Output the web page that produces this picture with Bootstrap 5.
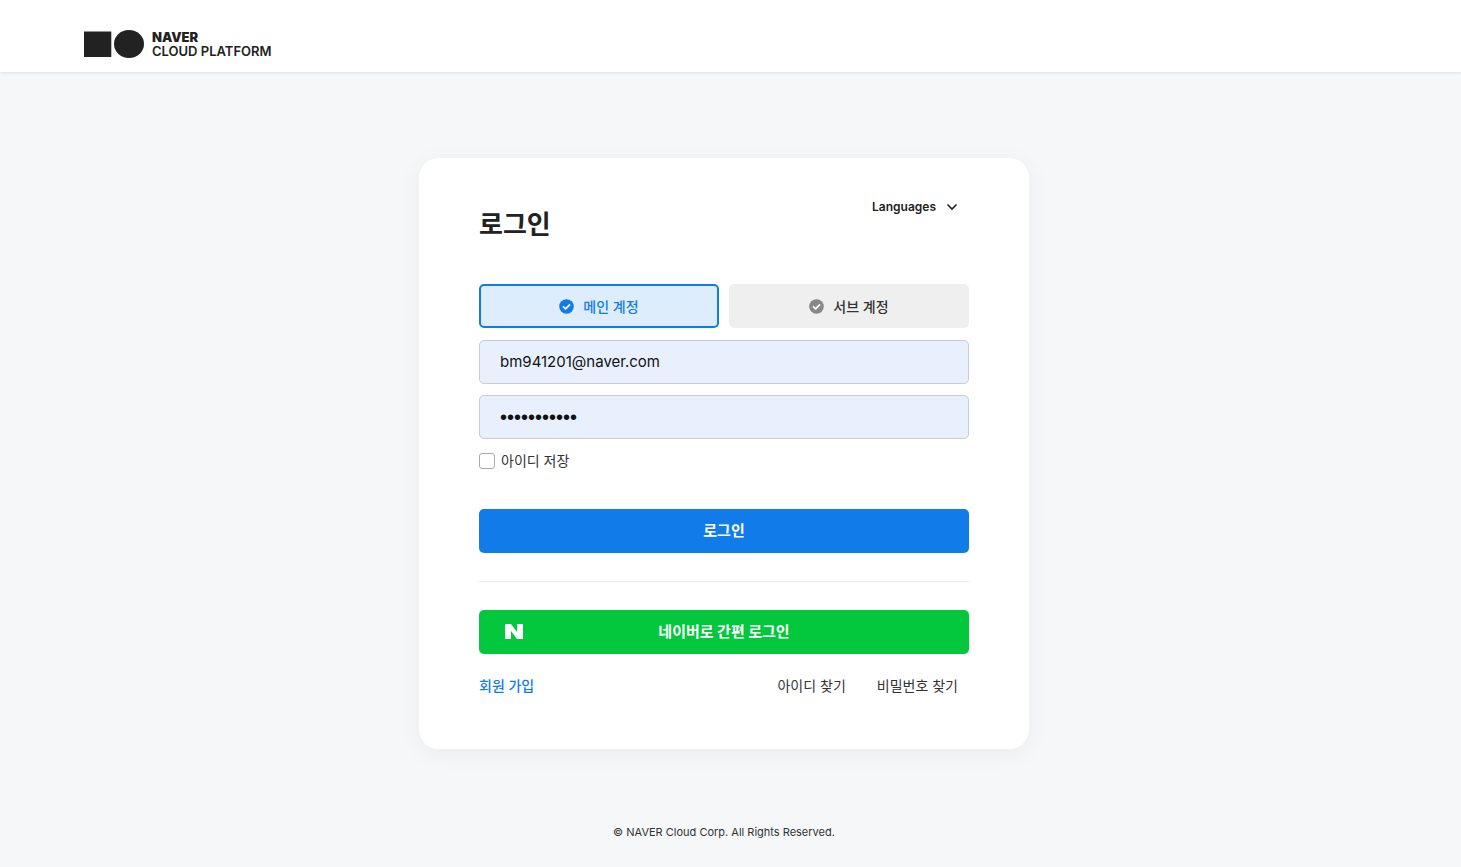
<!DOCTYPE html>
<html lang="ko">
<head>
<meta charset="utf-8">
<meta name="viewport" content="width=device-width, initial-scale=1">
<title>로그인 - NAVER Cloud Platform</title>
<link href="https://cdn.jsdelivr.net/npm/bootstrap@5.3.0/dist/css/bootstrap.min.css" rel="stylesheet">
<style>
  body { font-family: Inter, "Noto Sans CJK KR", sans-serif; font-size: 14px; line-height: 20px; color: #333; background: #f5f7f9; }
  a { color: inherit; text-decoration: none; }
  .site-header { height: 72px; padding: 16px 84px 0; box-shadow: 0 1px 3px rgba(0, 0, 0, .1); }
  .brand-name { font-size: 13px; line-height: 14px; font-weight: 600; color: #222; }
  .brand-name strong { font-size: 13px; font-weight: 900; }
  .page-main { padding: 86px 13px 0 0; }
  .login-panel { max-width: 610px; padding: 38px 60px 53px; border-radius: 20px; box-shadow: 0 4px 24px rgba(0, 0, 0, .05); }
  .login-title { font-size: 26px; line-height: 36px; font-weight: 700; color: #222; padding-top: 11px; margin-bottom: 41px; }
  .lang-btn { font-size: 12px; font-weight: 600; color: #222; padding: 1px 11px 0; gap: 10px; line-height: 20px; }
  .account-tab, .submit-btn, .login-input { height: 44px; border-radius: 5px; }
  .account-tab { font-size: 14px; font-weight: 500; gap: 9px; color: #333; background: #efefef; border: 2px solid #efefef; }
  .account-tab.selected { color: #117ce9; background: #deedfc; border-color: #117ce9; }
  .tab-row { gap: 10px; margin-bottom: 12px; }
  .login-input, .login-input:focus { font-size: 15px; color: #111; background: #e8f0fe; border: 1px solid #c9ccd2; padding: 0 20px 2px; }
  .login-input[type="password"] { font-family: "Liberation Sans", sans-serif; font-size: 20px; padding-bottom: 0; }
  .field-stack { gap: 11px; }
  .save-row { gap: 6px; margin: 12px 0 38px; }
  .save-row .form-check-input { width: 16px; height: 16px; margin: 0; border: 1px solid #aaa; border-radius: 3px; }
  .submit-btn { font-size: 15px; font-weight: 700; color: #fff; background: #117ce9; border: 0; }
  .submit-btn.naver { background: #03c83d; }
  .naver-mark { left: 26px; top: 14px; }
  .rule { border-color: #ebebeb; opacity: 1; margin: 28px 0; }
  .help-row { margin-top: 22px; padding-right: 11px; }
  .join-link { color: #117ce9; font-weight: 500; }
  .find-links { gap: 31px; }
  .site-footer { font-size: 11px; line-height: 16px; padding: 75px 13px 20px 0; }
</style>
</head>
<body>
<header class="site-header bg-white">
  <a href="#" class="d-inline-flex align-items-center gap-2">
    <svg width="60" height="56" viewBox="0 0 60 56" aria-hidden="true" fill="#222"><path d="M0 15.5h27.300v25.500H0z"/><ellipse cx="45" cy="28" rx="15" ry="14"/></svg>
    <span class="brand-name d-flex flex-column"><strong>NAVER</strong><span>CLOUD PLATFORM</span></span>
  </a>
</header>
<main class="page-main">
  <section class="login-panel bg-white mx-auto">
    <div class="d-flex justify-content-between align-items-start">
      <h1 class="login-title">로그인</h1>
      <button type="button" class="lang-btn btn border-0 d-flex align-items-center">Languages
        <svg width="12" height="8" viewBox="0 0 12 8" fill="none" stroke="#222" stroke-width="1.600" aria-hidden="true"><path d="M1.500 1.500 6 6l4.500-4.500"/></svg>
      </button>
    </div>
    <form>
      <div class="tab-row d-flex">
        <button type="button" class="account-tab selected btn flex-fill d-flex align-items-center justify-content-center py-0">
          <svg width="15" height="15" viewBox="0 0 15 15" aria-hidden="true"><circle cx="7.500" cy="7.500" r="7.300" fill="#117ce9"/><path d="m4 7.300 2.600 2.500L11 5.300" fill="none" stroke="#fff" stroke-width="1.700"/></svg>
          메인 계정</button>
        <button type="button" class="account-tab btn flex-fill d-flex align-items-center justify-content-center py-0">
          <svg width="15" height="15" viewBox="0 0 15 15" aria-hidden="true"><circle cx="7.500" cy="7.500" r="7.300" fill="#888"/><path d="m4 7.300 2.600 2.500L11 5.300" fill="none" stroke="#fff" stroke-width="1.700"/></svg>
          서브 계정</button>
      </div>
      <div class="field-stack d-flex flex-column">
        <input type="text" class="login-input form-control" aria-label="아이디" value="bm941201@naver.com">
        <input type="password" class="login-input form-control" aria-label="비밀번호" value="password123">
      </div>
      <div class="save-row d-flex align-items-center">
        <input type="checkbox" class="form-check-input" id="saveId">
        <label for="saveId">아이디 저장</label>
      </div>
      <button type="submit" class="submit-btn btn w-100">로그인</button>
      <hr class="rule">
      <button type="button" class="submit-btn naver btn w-100 position-relative">
        <svg class="naver-mark position-absolute" width="18" height="15" viewBox="0 0 18 15" fill="#fff" aria-hidden="true"><path d="M0 0h6l6 8V0h6v15h-6L6 7v8H0z"/></svg>
        네이버로 간편 로그인</button>
    </form>
    <div class="help-row d-flex justify-content-between">
      <a href="#" class="join-link">회원 가입</a>
      <div class="find-links d-flex"><a href="#">아이디 찾기</a><a href="#">비밀번호 찾기</a></div>
    </div>
  </section>
</main>
<footer class="site-footer text-center">© NAVER Cloud Corp. All Rights Reserved.</footer>
<script src="https://cdn.jsdelivr.net/npm/bootstrap@5.3.0/dist/js/bootstrap.bundle.min.js"></script>
</body>
</html>
